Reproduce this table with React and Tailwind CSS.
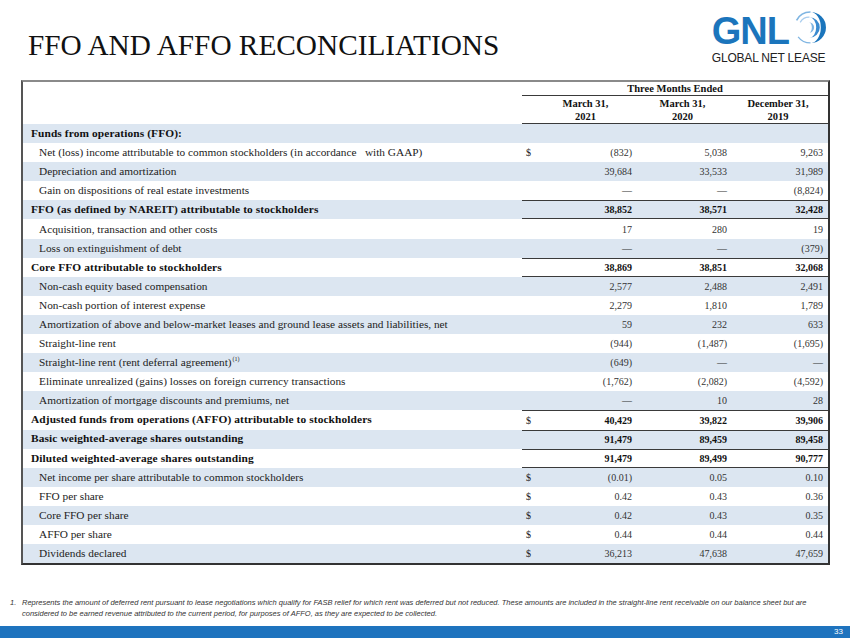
const rows = [
  { label: 'Funds from operations (FFO):', bold: true },
  { label: 'Net (loss) income attributable to common stockholders (in accordance\u00a0\u00a0 with GAAP)', dollar: true, v: ['(832)', '5,038', '9,263'] },
  { label: 'Depreciation and amortization', v: ['39,684', '33,533', '31,989'] },
  { label: 'Gain on dispositions of real estate investments', v: ['—', '—', '(8,824)'] },
  { label: 'FFO (as defined by NAREIT) attributable to stockholders', bold: true, rule: true, v: ['38,852', '38,571', '32,428'] },
  { label: 'Acquisition, transaction and other costs', v: ['17', '280', '19'] },
  { label: 'Loss on extinguishment of debt', v: ['—', '—', '(379)'] },
  { label: 'Core FFO attributable to stockholders', bold: true, rule: true, v: ['38,869', '38,851', '32,068'] },
  { label: 'Non-cash equity based compensation', v: ['2,577', '2,488', '2,491'] },
  { label: 'Non-cash portion of interest expense', v: ['2,279', '1,810', '1,789'] },
  { label: 'Amortization of above and below-market leases and ground lease assets and liabilities, net', v: ['59', '232', '633'] },
  { label: 'Straight-line rent', v: ['(944)', '(1,487)', '(1,695)'] },
  { label: 'Straight-line rent (rent deferral agreement)', sup: '(1)', v: ['(649)', '—', '—'] },
  { label: 'Eliminate unrealized (gains) losses on foreign currency transactions', v: ['(1,762)', '(2,082)', '(4,592)'] },
  { label: 'Amortization of mortgage discounts and premiums, net', v: ['—', '10', '28'] },
  { label: 'Adjusted funds from operations (AFFO) attributable to stockholders', bold: true, rule: true, dollar: true, v: ['40,429', '39,822', '39,906'] },
  { label: 'Basic weighted-average shares outstanding', bold: true, rule: true, v: ['91,479', '89,459', '89,458'] },
  { label: 'Diluted weighted-average shares outstanding', bold: true, rule: true, v: ['91,479', '89,499', '90,777'] },
  { label: 'Net income per share attributable to common stockholders', dollar: true, v: ['(0.01)', '0.05', '0.10'] },
  { label: 'FFO per share', dollar: true, v: ['0.42', '0.43', '0.36'] },
  { label: 'Core FFO per share', dollar: true, v: ['0.42', '0.43', '0.35'] },
  { label: 'AFFO per share', dollar: true, v: ['0.44', '0.44', '0.44'] },
  { label: 'Dividends declared', dollar: true, v: ['36,213', '47,638', '47,659'] },
];

function Logo() {
  return (
    <div className="flex flex-col items-start mt-[12px] mr-[23px]">
      <div className="flex items-start">
        <span
          className="text-[38px] leading-none font-bold text-[#1b75bc] tracking-[-1px]"
          style={{ fontFamily: '"Liberation Sans", Arial, sans-serif' }}
        >
          GNL
        </span>
        {/* swirl mark */}
        <svg width="33" height="33" viewBox="0 0 32 32" className="ml-[5px] -mt-[1px]">
          <path d="M16 1 A15 15 0 0 1 16 31 A10 15 0 0 0 16 1 Z" fill="#1b75bc" />
          <path d="M16 1 A15 15 0 0 0 2.5 9" stroke="#7fb5e2" strokeWidth="1.6" fill="none" />
          <path d="M16 31 A15 15 0 0 1 4 25" stroke="#7fb5e2" strokeWidth="1.2" fill="none" />
          <path d="M15 6 A10 10 0 0 1 15 26 A6.5 10 0 0 0 15 6 Z" fill="#3a8bd0" />
          <path d="M15 6 A10 10 0 0 0 6 11" stroke="#a9cdee" strokeWidth="1.2" fill="none" />
          <path d="M14.5 11 A5 5 0 0 1 14.5 21 A2.8 5 0 0 0 14.5 11 Z" fill="#7fb5e2" />
        </svg>
      </div>
      <span
        className="mt-[2px] text-[12px] leading-none text-[#222] tracking-[-0.2px]"
        style={{ fontFamily: '"Liberation Sans", Arial, sans-serif' }}
      >
        GLOBAL NET LEASE
      </span>
    </div>
  );
}

function Row({ r, i, next }) {
  const bg = i % 2 === 0 ? 'bg-[#dce6f1]' : 'bg-white';
  const top = r.rule ? 'border-t-[1.5px] border-[#3a3a3a]' : '';
  const bottom = r.rule && !(next && next.rule) ? 'border-b-[1.5px] border-[#3a3a3a]' : '';
  const numCls = `h-full flex items-center ${top} ${bottom}`;
  return (
    <div className={`grid grid-cols-[499px_16px_99px_95px_96px] h-[19.1px] ${bg}`}>
      <div
        className={`flex items-center whitespace-pre ${r.bold ? 'pl-[8px] font-bold text-[11.4px] text-[#111] tracking-[0.1px]' : 'pl-[16px] text-[11.3px] text-[#222]'}`}
      >
        {r.label}
        {r.sup && <sup className="text-[6px] ml-[1px] -top-[4px]">{r.sup}</sup>}
      </div>
      {r.v ? (
        <>
          <div className={`${numCls} pl-[4px] text-[10px] text-[#222]`}>{r.dollar ? '$' : ''}</div>
          {r.v.map((x, j) => (
            <div
              key={j}
              className={`${numCls} justify-end pr-[5px] text-[10px] ${r.bold ? 'font-bold text-[#111]' : 'text-[#333]'}`}
            >
              {x}
            </div>
          ))}
        </>
      ) : null}
    </div>
  );
}

export default function App() {
  return (
    <div
      className="w-[850px] h-[638px] bg-white flex flex-col overflow-hidden"
      style={{ fontFamily: '"Liberation Serif", "Times New Roman", serif' }}
    >
      {/* Header */}
      <div className="h-[80px] flex justify-between items-start">
        <h1 className="ml-[28px] mt-[31px] text-[29.3px] leading-none text-[#111] font-normal">
          FFO AND AFFO RECONCILIATIONS
        </h1>
        <Logo />
      </div>

      {/* Table */}
      <div className="ml-[21px] w-[809px] border-2 border-t-[#8a8a8a] border-l-[#555] border-r-[#333] border-b-[#333]">
        <div className="grid grid-cols-[499px_16px_99px_95px_96px] text-[10.5px] font-bold text-[#111]">
          <div />
          <div className="col-span-4 h-[14px] flex items-center justify-center border-b-[1.5px] border-[#3a3a3a]">
            Three Months Ended
          </div>
        </div>
        <div className="grid grid-cols-[499px_16px_99px_95px_96px] text-[10.5px] font-bold text-[#111]">
          <div />
          <div className="col-span-4 grid grid-cols-[16px_99px_95px_96px] h-[28px] border-b-[1.5px] border-[#3a3a3a]">
            <div />
            {[
              ['March 31,', '2021'],
              ['March 31,', '2020'],
              ['December 31,', '2019'],
            ].map(([a, b]) => (
              <div key={a + b} className="flex flex-col items-center justify-center leading-[13px] pr-[4px]">
                <span>{a}</span>
                <span>{b}</span>
              </div>
            ))}
          </div>
        </div>
        {rows.map((r, i) => (
          <Row key={i} r={r} i={i} next={rows[i + 1]} />
        ))}
      </div>

      {/* Footnote */}
      <div
        className="mt-[32px] flex text-[7.5px] italic leading-[11px] text-[#333]"
        style={{ fontFamily: '"Liberation Sans", Arial, sans-serif' }}
      >
        <span className="w-[22px] pl-[10px] shrink-0">1.</span>
        <p className="w-[800px]">
          Represents the amount of deferred rent pursuant to lease negotiations which qualify for FASB relief for which rent was deferred but not reduced. These amounts are included in the straight-line rent receivable on our balance sheet but are considered to be earned revenue attributed to the current period, for purposes of AFFO, as they are expected to be collected.
        </p>
      </div>

      {/* Footer bar */}
      <div className="mt-auto h-[12px] bg-[#1e73be] flex items-center justify-end pr-[7px]">
        <span
          className="text-[8px] leading-none text-white"
          style={{ fontFamily: '"Liberation Sans", Arial, sans-serif' }}
        >
          33
        </span>
      </div>
    </div>
  );
}
